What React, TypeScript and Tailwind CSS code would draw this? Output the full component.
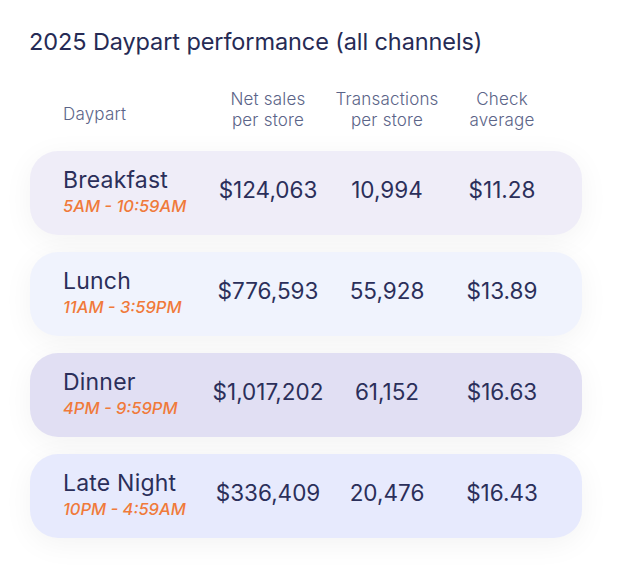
import React from "react";

const rows = [
  { name: "Breakfast", time: "5AM - 10:59AM", sales: "$124,063", tx: "10,994", avg: "$11.28", bg: "bg-[#efedf8]" },
  { name: "Lunch", time: "11AM - 3:59PM", sales: "$776,593", tx: "55,928", avg: "$13.89", bg: "bg-[#f0f3fd]" },
  { name: "Dinner", time: "4PM - 9:59PM", sales: "$1,017,202", tx: "61,152", avg: "$16.63", bg: "bg-[#e1dff3]" },
  { name: "Late Night", time: "10PM - 4:59AM", sales: "$336,409", tx: "20,476", avg: "$16.43", bg: "bg-[#e7eafd]" },
];

const cols = "grid grid-cols-[145px_120px_118px_112px] items-center";

export default function App() {
  return (
    <div className="w-[626px] h-[588px] bg-white font-['Inter',sans-serif] text-[#2b2f5a]">
      <div className="pt-[26px] pl-[29px]">
        <h1 className="text-[23.5px] leading-[32px] font-normal tracking-[-0.1px] text-[#262b55]">
          2025 Daypart performance (all channels)
        </h1>
      </div>
      <div className={`${cols} mt-[35px] ml-[30px] pl-[33px] text-[17px] leading-[21px] font-light tracking-[0.2px] text-[#5b6488]`}>
        <div className="pt-[4px]">Daypart</div>
        <div className="text-center -mt-[4px]">Net sales<br />per store</div>
        <div className="text-center -mt-[4px]">Transactions<br />per store</div>
        <div className="text-center -mt-[4px]">Check<br />average</div>
      </div>
      <div className="mt-[20px] ml-[30px] w-[552px] flex flex-col gap-[17px]">
        {rows.map((r) => (
          <div
            key={r.name}
            className={`${cols} ${r.bg} h-[84px] rounded-[28px] pl-[33px] shadow-[0_6px_30px_rgba(0,0,0,0.05)]`}
          >
            <div className="flex flex-col -mt-[3px]">
              <span className="text-[23px] leading-[28px] tracking-[0.2px] text-[#2b2f5a]">{r.name}</span>
              <span className="text-[16.5px] leading-[21px] mt-[2px] italic font-medium text-[#f07a3a]">{r.time}</span>
            </div>
            <div className="text-center text-[22.5px] -mt-[6px]">{r.sales}</div>
            <div className="text-center text-[22.5px] -mt-[6px]">{r.tx}</div>
            <div className="text-center text-[22.5px] -mt-[6px]">{r.avg}</div>
          </div>
        ))}
      </div>
    </div>
  );
}
